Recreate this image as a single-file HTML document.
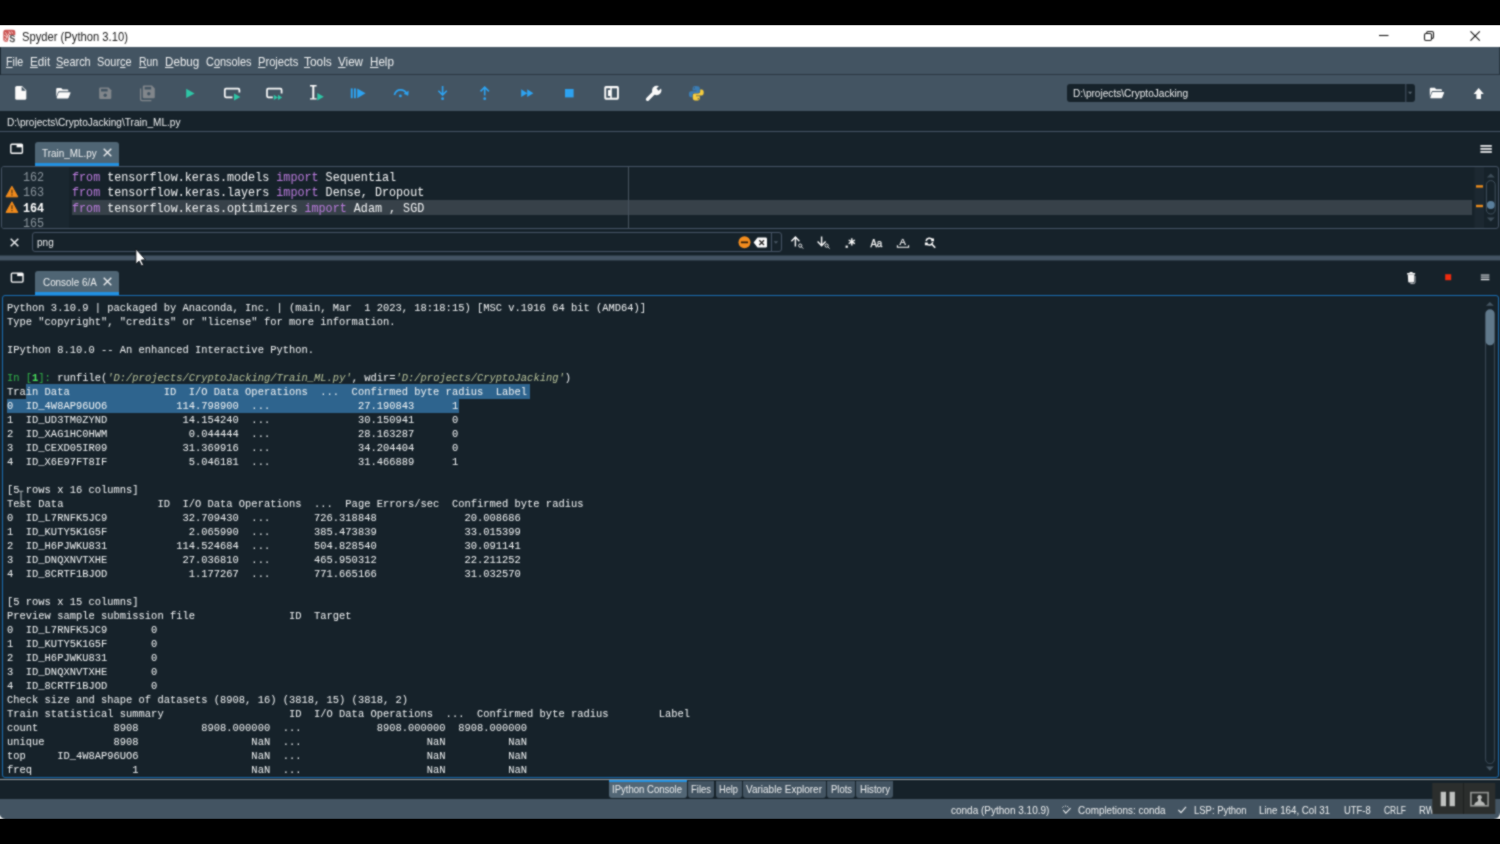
<!DOCTYPE html>
<html lang="en">
<head>
<meta charset="utf-8">
<title>Spyder (Python 3.10)</title>
<style>
html,body{margin:0;padding:0;}
body{width:1500px;height:844px;background:#000;overflow:hidden;position:relative;
  font-family:"Liberation Sans",sans-serif;color:#eceeef;filter:url(#soft);}
.abs{position:absolute;}
#win{left:0;top:25px;width:1500px;height:794px;background:#16222a;overflow:hidden;}
#title{left:0;top:0;width:1500px;height:22px;background:#fff;color:#202020;}
#title .t{left:21px;top:5px;font-size:12px;line-height:14px;white-space:nowrap;}
#menubar{left:0;top:22px;width:1500px;height:27px;background:#435462;}
#menubar .m{top:8px;font-size:12.4px;line-height:14px;white-space:nowrap;color:#eceeef;}
#menubar u{text-decoration:underline;text-underline-offset:0.6px;text-decoration-thickness:1px;}
#tbsep{left:0;top:49px;width:1500px;height:1px;background:#2b3843;}
#toolbar{left:0;top:50px;width:1500px;height:36px;background:#435462;}
.ic{position:absolute;overflow:visible;}
#cwd{left:1067px;top:9px;width:348px;height:18px;background:#16222a;border-radius:3px;}
#cwd .t{left:6px;top:2.5px;font-size:10.4px;line-height:13px;white-space:nowrap;color:#eceeef;}
#cwd .sep{left:337px;top:1px;width:1px;height:17px;background:#2b3843;}
#path{left:7px;top:91px;font-size:10.4px;line-height:13px;white-space:nowrap;color:#eceeef;}
.hline{left:0;width:1500px;height:1px;background:#455364;}
.tab{background:#4f6574;border-radius:3px 3px 0 0;border-bottom:3px solid #2290e0;box-sizing:border-box;}
.tab .t{font-size:10.4px;line-height:13px;white-space:nowrap;color:#eceeef;}
#editor{left:1px;top:141px;width:1496px;height:61px;border:1px solid #455364;border-radius:3px;overflow:hidden;box-sizing:content-box;}
#lnum{left:0;top:0;width:67px;height:61px;background:#1a2730;}
.mono{font-family:"Liberation Mono","DejaVu Sans Mono",monospace;}
.code{font-size:13.1px;transform:scaleX(0.8965);transform-origin:0 0;line-height:15.5px;white-space:pre;color:#f4f5f6;}
.kw{color:#bb7bdd;}
.ln{font-size:13.1px;transform:scaleX(0.8965);transform-origin:0 0;line-height:15.5px;color:#8a949c;white-space:pre;}
.ln.cur{color:#fff;font-weight:bold;}
#curline{left:70px;top:32.6px;width:1400.4px;height:15.5px;background:#374149;}
#find{left:31.5px;top:207px;width:748px;height:18px;border:1px solid #455364;border-radius:3px;box-sizing:content-box;}
#find .t{left:4px;top:3px;font-size:10.4px;line-height:13px;color:#eceeef;}
#split{left:0;top:230px;width:1500px;height:6px;background:linear-gradient(#2c3b46 0,#2c3b46 1px,#435363 1px,#435363 5px,#2a3842 5px);}
#console{left:2px;top:270px;width:1495px;height:481px;border:1px solid #1a6cb0;border-radius:3px;overflow:hidden;box-sizing:content-box;}
#context{left:4px;top:4.5px;margin:0;font-size:11.8px;line-height:14px;white-space:pre;color:#f2f4f5;transform:scaleX(0.8851);transform-origin:0 0;}
.pin{color:#31b448;}
.pnum{color:#4ae25c;font-weight:bold;}
.str{font-style:italic;color:#b7c29a;}
.sel{background:#2e648e;}
#btabs .bt{top:756px;height:17px;background:#435462;border-radius:0 0 3px 3px;box-sizing:border-box;font-size:10.4px;line-height:13px;color:#eceeef;white-space:nowrap;}
#btabs .bt span{position:absolute;top:2px;left:4px;}
#status{left:0;top:774px;width:1500px;height:20px;background:#435462;}
#status .s{top:5px;font-size:10.4px;line-height:13px;white-space:nowrap;color:#eceeef;}
.ov{top:783px;width:32px;height:32px;background:#1d2830;}
</style>
</head>
<body>
<svg class="abs" width="0" height="0" style="left:0;top:0"><defs><filter id="soft" x="0" y="0" width="100%" height="100%" color-interpolation-filters="sRGB"><feConvolveMatrix order="3" kernelMatrix="1 2 1 2 8 2 1 2 1" divisor="20" edgeMode="duplicate" preserveAlpha="true"/></filter></defs></svg>
<div id="win" class="abs">
  <div id="title" class="abs">
    <div class="abs t" style="left:21.60px;transform:scaleX(0.9338);transform-origin:0 50%">Spyder (Python 3.10)</div>
    </div>
  <div id="menubar" class="abs">
    <div class="abs m" style="left:5.90px;transform:scaleX(0.8607);transform-origin:0 50%"><u>F</u>ile</div>
    <div class="abs m" style="left:29.80px;transform:scaleX(0.9457);transform-origin:0 50%"><u>E</u>dit</div>
    <div class="abs m" style="left:56.00px;transform:scaleX(0.8837);transform-origin:0 50%"><u>S</u>earch</div>
    <div class="abs m" style="left:97.00px;transform:scaleX(0.8805);transform-origin:0 50%">Sour<u>c</u>e</div>
    <div class="abs m" style="left:138.60px;transform:scaleX(0.8440);transform-origin:0 50%"><u>R</u>un</div>
    <div class="abs m" style="left:164.50px;transform:scaleX(0.9389);transform-origin:0 50%"><u>D</u>ebug</div>
    <div class="abs m" style="left:205.90px;transform:scaleX(0.8803);transform-origin:0 50%">C<u>o</u>nsoles</div>
    <div class="abs m" style="left:258.00px;transform:scaleX(0.9002);transform-origin:0 50%"><u>P</u>rojects</div>
    <div class="abs m" style="left:304.20px;transform:scaleX(0.9607);transform-origin:0 50%"><u>T</u>ools</div>
    <div class="abs m" style="left:338.00px;transform:scaleX(0.9384);transform-origin:0 50%"><u>V</u>iew</div>
    <div class="abs m" style="left:370.00px;transform:scaleX(0.9373);transform-origin:0 50%"><u>H</u>elp</div>
  </div>
  <div id="tbsep" class="abs"></div>
  <div class="abs" style="left:0;top:22px;width:1px;height:28px;background:#1e2b35"></div>
  <div class="abs" style="left:1499px;top:22px;width:1px;height:28px;background:#2a3843"></div>
  <div id="toolbar" class="abs">
    <!--TOOLBAR_ICONS-->
    <div id="cwd" class="abs">
      <div class="abs t" style="left:6.30px;transform:scaleX(0.9714);transform-origin:0 50%">D:\projects\CryptoJacking</div>
      </div>
  </div>
  <div id="path" class="abs" style="left:6.90px;transform:scaleX(0.9712);transform-origin:0 50%">D:\projects\CryptoJacking\Train_ML.py</div>
  <div class="abs hline" style="top:106px"></div>

  <!-- editor tab row -->
  <!--EDITOR_TABROW-->
  <div class="abs tab" style="left:34.5px;top:117px;width:84.5px;height:24px;">
    <div class="abs t" style="top:5px;left:7.80px;transform:scaleX(0.9534);transform-origin:0 50%">Train_ML.py</div>
    <svg class="ic" style="left:68px;top:6px" width="9" height="9" viewBox="0 0 9 9"><path d="M0.7 0.7 L8.3 8.3 M8.3 0.7 L0.7 8.3" stroke="#e6e8ea" stroke-width="1.4"/></svg>
  </div>

  <div id="editor" class="abs">
    <div id="lnum" class="abs"></div>
    <div id="curline" class="abs"></div>
    <div class="abs" style="left:626px;top:0;width:1px;height:61px;background:#46525d"></div>
    <div class="abs mono ln" style="left:21px;top:2.5px">162
163
<span class="ln cur">164</span>
165</div>
    <div class="abs mono code" style="left:70px;top:2.5px"><span class="kw">from</span> tensorflow.keras.models <span class="kw">import</span> Sequential
<span class="kw">from</span> tensorflow.keras.layers <span class="kw">import</span> Dense, Dropout
<span class="kw">from</span> tensorflow.keras.optimizers <span class="kw">import</span> Adam , SGD</div>
    <!--EDITOR_EXTRAS-->
  </div>

  <!-- find bar -->
  <svg class="ic" style="left:10.3px;top:212.7px" width="9" height="9" viewBox="0 0 9 9"><path d="M0.7 0.7 L8.3 8.3 M8.3 0.7 L0.7 8.3" stroke="#e6e8ea" stroke-width="1.5"/></svg>
  <div id="find" class="abs"><div class="abs t" style="left:4.20px;transform:scaleX(0.9629);transform-origin:0 50%">png</div>
  <!--FIND_INNER-->
  </div>
  <!--FIND_ICONS-->
  <div id="split" class="abs"></div>

  <!-- console tab row -->
  <!--CONSOLE_TABROW-->
  <div class="abs tab" style="left:35px;top:246px;width:84px;height:24px;">
    <div class="abs t" style="top:5px;left:7.90px;transform:scaleX(0.9504);transform-origin:0 50%">Console 6/A</div>
    <svg class="ic" style="left:68px;top:6px" width="9" height="9" viewBox="0 0 9 9"><path d="M0.7 0.7 L8.3 8.3 M8.3 0.7 L0.7 8.3" stroke="#e6e8ea" stroke-width="1.4"/></svg>
  </div>

  <div id="console" class="abs">
    <div class="abs sel" style="left:23px;top:88px;width:503.5px;height:15px"></div>
    <div class="abs sel" style="left:4px;top:103px;width:452px;height:14px"></div>
<pre id="context" class="abs mono">Python 3.10.9 | packaged by Anaconda, Inc. | (main, Mar  1 2023, 18:18:15) [MSC v.1916 64 bit (AMD64)]
Type "copyright", "credits" or "license" for more information.

IPython 8.10.0 -- An enhanced Interactive Python.

<span class="pin">In [</span><span class="pnum">1</span><span class="pin">]:</span> runfile(<span class="str">'D:/projects/CryptoJacking/Train_ML.py'</span>, wdir=<span class="str">'D:/projects/CryptoJacking'</span>)
Train Data               ID  I/O Data Operations  ...  Confirmed byte radius  Label
0  ID_4W8AP96UO6           114.798900  ...              27.190843      1
1  ID_UD3TM0ZYND            14.154240  ...              30.150941      0
2  ID_XAG1HC0HWM             0.044444  ...              28.163287      0
3  ID_CEXD05IR09            31.369916  ...              34.204404      0
4  ID_X6E97FT8IF             5.046181  ...              31.466889      1

[5 rows x 16 columns]
Test Data               ID  I/O Data Operations  ...  Page Errors/sec  Confirmed byte radius
0  ID_L7RNFK5JC9            32.709430  ...       726.318848              20.008686
1  ID_KUTY5K1G5F             2.065990  ...       385.473839              33.015399
2  ID_H6PJWKU831           114.524684  ...       504.828540              30.091141
3  ID_DNQXNVTXHE            27.036810  ...       465.950312              22.211252
4  ID_8CRTF1BJOD             1.177267  ...       771.665166              31.032570

[5 rows x 15 columns]
Preview sample submission file               ID  Target
0  ID_L7RNFK5JC9       0
1  ID_KUTY5K1G5F       0
2  ID_H6PJWKU831       0
3  ID_DNQXNVTXHE       0
4  ID_8CRTF1BJOD       0
Check size and shape of datasets (8908, 16) (3818, 15) (3818, 2)
Train statistical summary                    ID  I/O Data Operations  ...  Confirmed byte radius        Label
count            8908          8908.000000  ...            8908.000000  8908.000000
unique           8908                  NaN  ...                    NaN          NaN
top     ID_4W8AP96UO6                  NaN  ...                    NaN          NaN
freq                1                  NaN  ...                    NaN          NaN</pre>
    <!--CONSOLE_EXTRAS-->
  </div>

  <div class="abs" style="left:0;top:754px;width:1500px;height:1px;background:#969da2"></div>
  <div id="btabs">
    <div class="abs bt" style="left:608.5px;width:78px;top:755px;height:18px;background:#526675;border-top:2px solid #2290e0"><span style="top:1px;left:3.90px;transform:scaleX(0.9180);transform-origin:0 50%">IPython Console</span></div>
    <div class="abs bt" style="left:688px;width:26px"><span style="left:3.00px;transform:scaleX(0.9110);transform-origin:0 50%">Files</span></div>
    <div class="abs bt" style="left:715.6px;width:26px"><span style="left:3.41px;transform:scaleX(0.8889);transform-origin:0 50%">Help</span></div>
    <div class="abs bt" style="left:743px;width:83px"><span style="left:3.40px;transform:scaleX(0.9628);transform-origin:0 50%">Variable Explorer</span></div>
    <div class="abs bt" style="left:827.4px;width:27.6px"><span style="left:3.21px;transform:scaleX(0.9087);transform-origin:0 50%">Plots</span></div>
    <div class="abs bt" style="left:856.4px;width:36.6px"><span style="left:3.21px;transform:scaleX(0.9275);transform-origin:0 50%">History</span></div>
  </div>
  <div id="status" class="abs">
    <div class="abs s" style="left:951.00px;transform:scaleX(0.9623);transform-origin:0 50%">conda (Python 3.10.9)</div>
    <div class="abs s" style="left:1078.00px;transform:scaleX(0.9516);transform-origin:0 50%">Completions: conda</div>
    <div class="abs s" style="left:1193.90px;transform:scaleX(0.9106);transform-origin:0 50%">LSP: Python</div>
    <div class="abs s" style="left:1259.30px;transform:scaleX(0.9381);transform-origin:0 50%">Line 164, Col 31</div>
    <div class="abs s" style="left:1344.20px;transform:scaleX(0.9036);transform-origin:0 50%">UTF-8</div>
    <div class="abs s" style="left:1383.60px;transform:scaleX(0.8106);transform-origin:0 50%">CRLF</div>
    <div class="abs s" style="left:1418.80px;transform:scaleX(0.9168);transform-origin:0 50%">RW</div>
    <!--STATUS_ICONS-->
  </div>
</div>
<svg id="icons" class="abs" style="left:0;top:0" width="1500" height="844" viewBox="0 0 1500 844">
<!-- window controls -->
<g stroke="#1c1c1c" fill="none" stroke-width="1.1">
<path d="M1379 35.5 H1388.5"/>
<rect x="1424.5" y="33.5" width="7" height="7" rx="1.5"/>
<path d="M1426.7 33.3 V32.8 Q1426.7 31.5 1428 31.5 H1432 Q1433.5 31.5 1433.5 33 V37 Q1433.5 38.4 1432.2 38.4 H1431.7"/>
<path d="M1470.5 31.3 L1479.8 40.6 M1479.8 31.3 L1470.5 40.6" stroke-width="1.2"/>
</g>
<!-- app icon -->
<g>
<rect x="3.3" y="29.7" width="12" height="12.1" rx="2.3" fill="#cb5553"/>
<path d="M9.2 35 H16 V42.4 H7.4 Z" fill="#fff"/>
<path d="M4.6 40.8 L9.8 32.4 M4 35.4 L8.6 37.6 M5.4 32.2 L7.6 36.4 M4.2 38.6 L7 40.6 M8.8 31 L10.6 34 M11.6 31.4 L12.8 33.6" stroke="#f3cfce" stroke-width="0.9" fill="none"/>
<text x="9.5" y="41.6" font-family="Liberation Sans, sans-serif" font-size="12.6" fill="#4a4a4a" stroke="#4a4a4a" stroke-width="0.45" textLength="5.6" lengthAdjust="spacingAndGlyphs">s</text>
</g>
<!-- toolbar: new file -->
<path d="M15.2 87.6 Q15.2 86 16.8 86 H22 L26.3 90.3 V98.2 Q26.3 99.8 24.7 99.8 H16.8 Q15.2 99.8 15.2 98.2 Z" fill="#fafafa"/>
<path d="M21.6 86.6 V90.8 H25.8 Z" fill="#435462"/>
<!-- open folder -->
<g id="fold1">
<path d="M56.2 89.2 Q56.2 88 57.4 88 H61.2 L62.6 89.4 H67.2 Q68.4 89.4 68.4 90.6 V91.3 H59.2 Q58.2 91.3 57.9 92.2 L56.2 97 Z" fill="#fafafa"/>
<path d="M59.3 92.2 H70 Q70.8 92.2 70.5 93 L68.6 97.8 Q68.3 98.4 67.6 98.4 H57.2 Q56.4 98.4 56.7 97.6 L58.4 92.9 Q58.7 92.2 59.3 92.2 Z" fill="#fafafa"/>
</g>
<!-- save (disabled) -->
<g fill="#81868b">
<path d="M99.2 88.8 Q99.2 87.6 100.4 87.6 H108.6 L111.3 90.3 V97.8 Q111.3 99 110.1 99 H100.4 Q99.2 99 99.2 97.8 Z"/>
</g>
<rect x="101" y="88.9" width="6.6" height="2.6" fill="#435462"/>
<circle cx="105.2" cy="95.2" r="1.7" fill="#435462"/>
<!-- save all (disabled) -->
<path d="M140.6 88.6 V99.2 Q140.6 100.6 142 100.6 H151.4" fill="none" stroke="#81868b" stroke-width="1.3"/>
<path d="M142.8 86.8 Q142.8 85.6 144 85.6 H152 L154.8 88.4 V97 Q154.8 98.2 153.6 98.2 H144 Q142.8 98.2 142.8 97 Z" fill="#81868b"/>
<rect x="144.6" y="86.9" width="6.6" height="2.6" fill="#435462"/>
<circle cx="148.8" cy="93.8" r="1.7" fill="#435462"/>
<!-- run -->
<path d="M186.2 88.8 L194.6 93.4 L186.2 98 Z" fill="#2ec6a6"/>
<!-- run cell -->
<path d="M232.5 97.3 H226 Q224.8 97.3 224.8 96.1 V89.9 Q224.8 88.7 226 88.7 H238.2 Q239.4 88.7 239.4 89.9 V92.6" fill="none" stroke="#fafafa" stroke-width="1.7"/>
<path d="M234 93.4 L240.4 97 L234 100.6 Z" fill="#2ec6a6"/>
<!-- run cell advance -->
<path d="M272.8 97.3 H268.2 Q267 97.3 267 96.1 V89.9 Q267 88.7 268.2 88.7 H280.4 Q281.6 88.7 281.6 89.9 V93.6" fill="none" stroke="#fafafa" stroke-width="1.7"/>
<path d="M273.8 94.8 L278 97.4 L273.8 100 Z M278 94.8 L282.2 97.4 L278 100 Z" fill="#2ec6a6"/>
<!-- run selection -->
<path d="M310 85.7 H316.6 M310 98.9 H316.6" fill="none" stroke="#fafafa" stroke-width="1.4"/><path d="M313.3 85.7 V98.9" fill="none" stroke="#fafafa" stroke-width="2"/>
<path d="M317.3 93.1 L323.8 96.8 L317.3 100.5 Z" fill="#2ec6a6"/>
<!-- debug -->
<g fill="#2da2f0">
<rect x="350.8" y="88.4" width="1.9" height="9.8"/>
<rect x="354" y="88.4" width="1.9" height="9.8"/>
<path d="M357.2 88.4 L365.6 93.3 L357.2 98.2 Z"/>
</g>
<!-- step over -->
<path d="M394.4 95 Q395.8 89.8 400.6 89.8 Q404.6 89.8 406.2 93" fill="none" stroke="#2da2f0" stroke-width="1.7"/>
<path d="M408.4 91.2 L408 95.4 L404 93.6 Z" fill="#2da2f0" stroke="#2da2f0" stroke-width="0.5" stroke-linejoin="round"/>
<circle cx="400.4" cy="95.9" r="1.4" fill="#2da2f0"/>
<!-- step into -->
<path d="M442.6 86 V94.6 M438.4 90.8 L442.6 95 L446.8 90.8" fill="none" stroke="#2da2f0" stroke-width="1.6"/>
<circle cx="442.6" cy="98.7" r="1.4" fill="#2da2f0"/>
<!-- step out -->
<path d="M484.7 95.6 V87.6 M480.5 91.4 L484.7 87.2 L488.9 91.4" fill="none" stroke="#2da2f0" stroke-width="1.6"/>
<circle cx="484.7" cy="98.7" r="1.4" fill="#2da2f0"/>
<!-- continue -->
<path d="M521.2 89.3 L527.4 93.2 L521.2 97.1 Z M527.2 89.3 L533.4 93.2 L527.2 97.1 Z" fill="#2da2f0"/>
<!-- stop -->
<rect x="565" y="89" width="8.6" height="8.4" fill="#2da2f0"/>
<!-- maximize pane -->
<rect x="604.3" y="86.1" width="14.6" height="13.6" rx="1.6" fill="#fafafa"/>
<rect x="611.8" y="88.3" width="5.2" height="9.4" fill="#435462"/>
<path d="M606.2 88.3 H610.2 V90 H608 V96 H610.2 V97.7 H606.2 Z" fill="#435462"/>
<!-- wrench -->
<g id="wrench">
<path d="M647.6 99.2 L655.2 91.6" stroke="#fafafa" stroke-width="3.5" stroke-linecap="round" fill="none"/>
<circle cx="656.7" cy="90.5" r="4.7" fill="#fafafa"/>
<path d="M657.6 89.6 L662.6 84.6" stroke="#435462" stroke-width="3.1" fill="none"/>
</g>
<!-- python -->
<g id="py">
<path d="M695.8 86 Q692.6 86 692.6 88.4 V90.4 H696.4 V91.2 H691 Q688.9 91.2 688.9 94.2 Q688.9 97.2 691 97.2 H692.4 V95 Q692.4 93 694.6 93 H698.2 Q699.8 93 699.8 91.2 V88.4 Q699.8 86 695.8 86 Z" fill="#3b7db5"/>
<path d="M696.6 100.6 Q699.8 100.6 699.8 98.2 V96.2 H696 V95.4 H701.6 Q703.7 95.4 703.7 92.4 Q703.7 89.4 701.6 89.4 H700.2 V91.6 Q700.2 93.6 698 93.6 H694.4 Q692.8 93.6 692.8 95.4 V98.2 Q692.8 100.6 696.6 100.6 Z" fill="#f5cc3e"/>
<circle cx="694.3" cy="87.9" r="0.7" fill="#435462"/>
<circle cx="698.2" cy="98.8" r="0.7" fill="#435462"/>
</g>
<!-- cwd folder -->
<g transform="translate(1373.6,-0.2)">
<path d="M56.2 89.2 Q56.2 88 57.4 88 H61.2 L62.6 89.4 H67.2 Q68.4 89.4 68.4 90.6 V91.3 H59.2 Q58.2 91.3 57.9 92.2 L56.2 97 Z" fill="#fafafa"/>
<path d="M59.3 92.2 H70 Q70.8 92.2 70.5 93 L68.6 97.8 Q68.3 98.4 67.6 98.4 H57.2 Q56.4 98.4 56.7 97.6 L58.4 92.9 Q58.7 92.2 59.3 92.2 Z" fill="#fafafa"/>
</g>
<!-- up arrow -->
<path d="M1478.7 88 L1483.8 94 H1481 V99 H1476.4 V94 H1473.6 Z" fill="#fafafa"/>
<!-- tabs browse icons -->
<g id="tb1">
<rect x="10.8" y="144.3" width="11.6" height="9" rx="1" fill="none" stroke="#fafafa" stroke-width="1.4"/>
<rect x="16.6" y="144.3" width="5.8" height="3" fill="#fafafa"/>
</g>
<g transform="translate(0.6,128.8)">
<rect x="10.8" y="144.3" width="11.6" height="9" rx="1" fill="none" stroke="#fafafa" stroke-width="1.4"/>
<rect x="16.6" y="144.3" width="5.8" height="3" fill="#fafafa"/>
</g>
<!-- hamburger editor -->
<g fill="#f0f1f2">
<rect x="1480.4" y="145.1" width="11.4" height="1.7"/>
<rect x="1480.4" y="148.1" width="11.4" height="1.7"/>
<rect x="1480.4" y="151.1" width="11.4" height="1.7"/>
</g>
<!-- warnings -->
<g id="warn1">
<path d="M11.9 186.2 L17.8 196.8 H6 Z" fill="#f08a1c" stroke="#f08a1c" stroke-width="1" stroke-linejoin="round"/>
<rect x="11.3" y="189.6" width="1.3" height="3.8" fill="#5c3c12"/>
<rect x="11.3" y="194.3" width="1.3" height="1.3" fill="#5c3c12"/>
</g>
<g transform="translate(0,15.6)">
<path d="M11.9 186.2 L17.8 196.8 H6 Z" fill="#f08a1c" stroke="#f08a1c" stroke-width="1" stroke-linejoin="round"/>
<rect x="11.3" y="189.6" width="1.3" height="3.8" fill="#5c3c12"/>
<rect x="11.3" y="194.3" width="1.3" height="1.3" fill="#5c3c12"/>
</g>
<!-- editor scroll -->
<rect x="1474.5" y="167" width="9.5" height="61" fill="#1c2831"/>
<rect x="1476" y="185.2" width="7" height="2.4" fill="#ea8b1c"/>
<rect x="1476" y="204.8" width="7" height="2.4" fill="#ea8b1c"/>
<path d="M1486.8 177.4 L1490.8 173.6 L1494.8 177.4 Z" fill="#3d4c58"/>
<path d="M1486.8 217.4 L1490.8 221.4 L1494.8 217.4 Z" fill="#3d4c58"/>
<rect x="1486.4" y="180.6" width="8.8" height="33.4" rx="4.2" fill="none" stroke="#3f4f5c" stroke-width="1"/>
<circle cx="1490.8" cy="205" r="3.9" fill="#5a7f9c"/>
<!-- find icons -->
<circle cx="744.5" cy="242.3" r="6" fill="#f28c1e"/>
<rect x="740.9" y="241.5" width="7.2" height="1.7" fill="#2a1a08"/>
<path d="M757.6 237.6 H765.6 Q767 237.6 767 239 V246.2 Q767 247.6 765.6 247.6 H757.6 L753.6 242.6 Z" fill="#fafafa"/>
<path d="M759.3 240.2 L764 245 M764 240.2 L759.3 245" stroke="#222" stroke-width="1.3" fill="none"/>
<rect x="771" y="233" width="1" height="18" fill="#455364"/>
<path d="M773.6 241.2 H778.2 L775.9 243.8 Z" fill="#4a5966"/>
<g stroke="#fafafa" fill="none" stroke-width="1.4">
<path d="M795.4 246.4 V237 M791.4 241.2 L795.4 237 L799.4 241.2"/>
<circle cx="800.2" cy="245.6" r="1.6" stroke-width="0.9"/><path d="M801.4 246.8 L803.2 248.6" stroke-width="0.9"/>
<path d="M821.6 236.4 V245.8 M817.6 241.6 L821.6 245.8 L825.6 241.6"/>
<circle cx="826.6" cy="245.6" r="1.6" stroke-width="0.9"/><path d="M827.8 246.8 L829.6 248.6" stroke-width="0.9"/>
</g>
<!-- regex -->
<rect x="845.6" y="245.6" width="2.2" height="2.2" fill="#fafafa"/>
<path d="M851.8 238.2 V245.4 M848.7 240 L854.9 243.6 M854.9 240 L848.7 243.6" stroke="#fafafa" stroke-width="1.4" fill="none"/>
<!-- Aa / A icons (text) -->
<text x="870.4" y="246.6" font-family="Liberation Sans, sans-serif" font-size="10.2" fill="#fafafa" stroke="#fafafa" stroke-width="0.25" textLength="11.8" lengthAdjust="spacingAndGlyphs">Aa</text>
<text x="899.4" y="245.4" font-family="Liberation Sans, sans-serif" font-size="9.6" fill="#fafafa" stroke="#fafafa" stroke-width="0.2">A</text>
<path d="M897.4 245.2 V247.2 H908.6 V245.2" stroke="#fafafa" stroke-width="1.1" fill="none"/>
<!-- replace icon -->
<g stroke="#fafafa" fill="none">
<path d="M926.05 241 A3.4 3.4 0 0 1 932.34 239.9" stroke-width="1.5"/>
<path d="M932.75 242.2 A3.4 3.4 0 0 1 926.46 243.3" stroke-width="1.5"/>
<path d="M931.9 244.2 L935.2 247.8" stroke-width="1.6"/>
</g>
<path d="M931.2 238.4 H934 V241.2 H931.2 Z M924.9 242.4 H927.7 V245.2 H924.9 Z" fill="#fafafa"/>
<!-- console right icons -->
<g id="trash">
<path d="M1407.8 274.6 H1414.4 L1414 281.6 Q1414 282.6 1413 282.6 H1409.2 Q1408.2 282.6 1408.2 281.6 Z" fill="#f4f4f4"/>
<rect x="1407" y="273" width="8.2" height="1.5" rx="0.6" fill="#f4f4f4"/>
<rect x="1409.6" y="272" width="3" height="1.2" fill="#f4f4f4"/>
<path d="M1415 276 V282.2 Q1415 283.6 1413.6 283.6 H1410.4" stroke="#c9ccd0" stroke-width="0.9" fill="none"/>
</g>
<rect x="1445.2" y="274.2" width="6" height="6" fill="#ee2b0e"/>
<g fill="#e4e6e8">
<rect x="1480.8" y="274.4" width="8.6" height="1.3" fill="#b9bec2"/>
<rect x="1480.8" y="276.5" width="8.6" height="1.3" fill="#b9bec2"/>
<rect x="1480.8" y="278.8" width="8.6" height="1.4"/>
</g>
<!-- console scrollbar -->
<path d="M1486 305.8 L1489.9 302 L1493.8 305.8 Z" fill="#465663"/>
<path d="M1486 766.6 L1489.9 770.8 L1493.8 766.6 Z" fill="#465663"/>
<rect x="1485.6" y="309.6" width="8.8" height="454" rx="4.2" fill="none" stroke="#3c4b58" stroke-width="1"/>
<rect x="1485.6" y="309.6" width="8.8" height="35.6" rx="4.2" fill="#60798b"/>
<!-- status icons -->
<g stroke="#e6e8ea" fill="none" stroke-width="1.1">
<path d="M1063.2 810 L1065.8 813.2 L1070.6 808.2"/>
<path d="M1062.4 807.6 l1.2 -1.2 m1.4 -0.2 l1 -0.2 m1.2 0.2 l1.2 1.2" stroke-width="1"/>
<path d="M1178.4 810 L1181 812.6 L1186 806.8" stroke-width="1.2"/>
</g>
<!-- cwd dropdown -->
<rect x="1405.3" y="84" width="1" height="18" fill="#455364"/>
<path d="M1408 91.8 H1412.2 L1410.1 94.2 Z" fill="#56646f"/>
<!-- overlay buttons -->
<rect x="1432.3" y="783" width="63" height="31" fill="#2b2e2d"/>
<rect x="1463" y="783" width="1" height="31" fill="#1d201f"/>
<rect x="1440.7" y="791.8" width="5.3" height="14.4" fill="#bfc1bf"/>
<rect x="1449.6" y="791.8" width="5.3" height="14.4" fill="#bfc1bf"/>
<rect x="1470.9" y="792.6" width="17.2" height="13.2" fill="none" stroke="#929492" stroke-width="1.6"/>
<circle cx="1479.6" cy="797.2" r="2.2" fill="#b6b8b6"/>
<path d="M1474.2 805.2 Q1474.6 802 1477.6 801.4 L1478.4 799 H1480.8 L1481.6 801.4 Q1484.6 802 1485 805.2 Z" fill="#b6b8b6"/>
<path d="M1500 812.4 Q1499.6 818.4 1493.6 819 H1500 Z" fill="#eceeef"/>
<!-- progress line -->
<rect x="0" y="779" width="1500" height="1" fill="#5e686f" opacity="0.0"/>
<path d="M0 814.6 Q0.4 818.6 5.4 819 H0 Z" fill="#eceeef"/>
<!-- mouse cursor -->
<path d="M135.9 248.9 V264.2 L139.1 261.1 L141.6 266 L143.6 265.1 L141.2 260.1 L145.5 259.7 Z" fill="#fff" stroke="#0b1116" stroke-width="0.9" stroke-linejoin="round"/>
<!-- ibeam cursor -->
<path d="M18.6 491.3 H23.4 M18.8 506.2 H23.2 M21 491.3 V506.2" stroke="#a3aaaf" stroke-width="1.1" fill="none"/>
</svg>

</body>
</html>
